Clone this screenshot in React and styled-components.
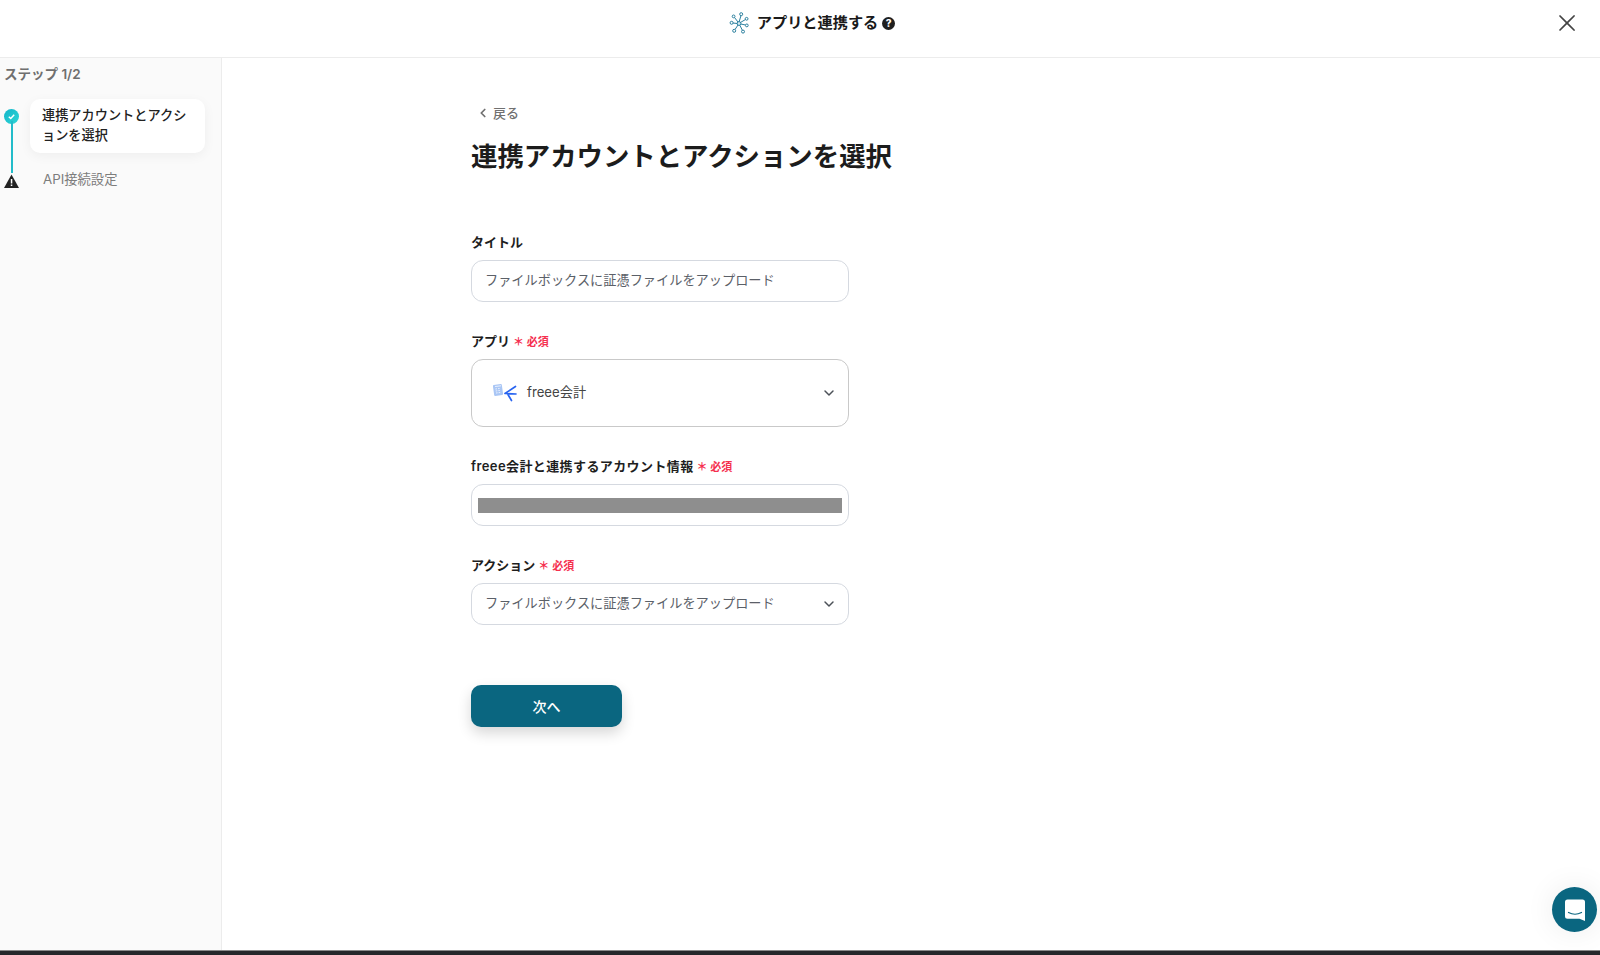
import React from "react";
import styled, { createGlobalStyle } from "styled-components";
import { HiXMark } from "react-icons/hi2";
import { FiChevronDown, FiChevronLeft } from "react-icons/fi";

const GlobalStyle = createGlobalStyle`
  html, body {
    margin: 0;
    padding: 0;
    background: #fff;
    font-family: Inter, "Noto Sans CJK JP", sans-serif;
    overflow: hidden;
  }
`;

const NetworkIcon = () => (
  <svg width="20" height="22" viewBox="0 0 20 22" fill="none" stroke="#2a7f9e" strokeWidth="1">
    <circle cx="10" cy="11.5" r="1.9" fill="#d6ecf3" />
    <path d="M10.2 9.6 L12 3.5 M11.6 10.4 L16.5 7.5 M11.8 12 L16.5 13 M10.8 13.2 L13.5 18.5 M9 13 L6 17.5 M8.2 11.5 L4 11 M9 10 L5.5 5.5" />
    <circle cx="12.2" cy="2.2" r="1.5" fill="#fff" />
    <circle cx="17.6" cy="6.8" r="1.4" fill="#fff" />
    <circle cx="17.8" cy="13.4" r="1.4" fill="#fff" />
    <circle cx="14" cy="19.6" r="1.5" fill="#fff" />
    <circle cx="5.2" cy="18.8" r="1.5" fill="#fff" />
    <circle cx="2.6" cy="10.8" r="1.5" fill="#fff" />
    <circle cx="4.6" cy="4.4" r="1.4" fill="#fff" />
  </svg>
);

const FreeeIcon = () => (
  <svg width="24" height="20" viewBox="0 0 24 20" fill="none">
    <rect x="0.5" y="1.5" width="9" height="11" rx="1" transform="rotate(-8 5 7)" fill="#a9c6f5" />
    <path d="M2 3.5 L8 2.8 M2.4 6 L4 5.8 M5 5.7 L6.6 5.5 M2.7 8 L4.3 7.8 M5.3 7.7 L6.9 7.5 M3 10 L4.6 9.8 M5.6 9.7 L7.2 9.5" stroke="#f2f6fe" strokeWidth="0.9" />
    <path d="M22.5 3.5 L12 10.5 L23 11 M14.5 10.8 L18.5 17.5" stroke="#2864f0" strokeWidth="1.7" strokeLinecap="round" strokeLinejoin="round" />
  </svg>
);

const ChatIcon = () => (
  <svg width="24" height="24" viewBox="0 0 24 24">
    <path d="M4.5 1.5 H19.5 A2.5 2.5 0 0 1 22 4 V23 L16.5 20.8 H4.5 A2.5 2.5 0 0 1 2 18.3 V4 A2.5 2.5 0 0 1 4.5 1.5 Z" fill="#fff" />
    <path d="M5.5 14.5 Q12 18 18.5 14.5" stroke="#0a6680" strokeWidth="1.2" fill="none" strokeLinecap="round" />
  </svg>
);

const Page = styled.div`
  display: flex;
  flex-direction: column;
  width: 1600px;
  height: 955px;
`;

const Header = styled.header`
  flex: 0 0 58px;
  box-sizing: border-box;
  display: flex;
  align-items: flex-start;
  justify-content: center;
  position: relative;
  border-bottom: 1px solid #ececec;
  padding-top: 12px;
  padding-left: 24px;
`;

const HeaderTitle = styled.h1`
  display: flex;
  align-items: center;
  margin: 0;
  font-size: 15.2px;
  line-height: 22px;
  font-weight: 600;
  color: #1a1a1a;
  svg {
    margin-right: 8px;
  }
`;

const HelpBadge = styled.span`
  width: 13px;
  height: 13px;
  margin-left: 4px;
  border-radius: 50%;
  background: #1f1f1f;
  color: #fff;
  font-size: 10px;
  line-height: 13px;
  font-weight: 800;
  text-align: center;
`;

const CloseButton = styled.button`
  position: absolute;
  top: 9px;
  right: 19px;
  padding: 0;
  display: flex;
  border: none;
  background: transparent;
  color: #444;
`;

const Body = styled.div`
  flex: 1;
  display: flex;
  min-height: 0;
`;

const Sidebar = styled.aside`
  flex: 0 0 222px;
  box-sizing: border-box;
  background: #fafafa;
  border-right: 1px solid #ececec;
  padding: 7px 16px 0 4px;
`;

const StepCount = styled.div`
  font-size: 13.5px;
  line-height: 18px;
  font-weight: 600;
  color: #6f6f6f;
  margin-bottom: 16px;
`;

const StepRow = styled.div`
  display: flex;
  align-items: flex-start;
  position: relative;
`;

const StepMarker = styled.div`
  flex: 0 0 26px;
  display: flex;
  padding-top: ${(p) => p.$top}px;
`;

const CheckDot = styled.span`
  width: 15px;
  height: 15px;
  border-radius: 50%;
  background: linear-gradient(135deg, #12b5c9, #2fd6d6);
  display: flex;
  align-items: center;
  justify-content: center;
`;

const StepLine = styled.span`
  position: absolute;
  left: 6.5px;
  top: 22px;
  width: 2px;
  height: 52px;
  background: #22bcca;
`;

const ActiveStep = styled.div`
  flex: 1;
  background: #fff;
  border-radius: 10px;
  box-shadow: 0 3px 12px rgba(0, 0, 0, 0.05);
  padding: 6px 12px 8px;
  font-size: 13.2px;
  line-height: 20px;
  font-weight: 500;
  color: #222;
`;

const IdleStep = styled.div`
  padding: 16px 0 0 13px;
  font-size: 13.3px;
  line-height: 20px;
  color: #7d7d7d;
`;

const Main = styled.main`
  flex: 1;
  padding: 0 0 0 249px;
`;

const BackLink = styled.a`
  display: flex;
  align-items: center;
  gap: 3px;
  margin: 46px 0 0 5px;
  font-size: 13px;
  line-height: 18px;
  font-weight: 500;
  color: #707070;
`;

const Heading = styled.h2`
  margin: 16px 0 0;
  font-size: 26.4px;
  line-height: 36px;
  font-weight: 600;
  color: #1c1c1c;
`;

const Form = styled.div`
  width: 378px;
  margin-top: 57px;
`;

const Field = styled.div`
  margin-bottom: ${(p) => p.$gap}px;
`;

const Label = styled.div`
  display: flex;
  align-items: center;
  height: 20px;
  margin-bottom: 9px;
  font-size: 13px;
  font-weight: 600;
  color: #1e1e1e;
  letter-spacing: ${(p) => (p.$wide ? "0.4px" : "0")};
`;

const Required = styled.span`
  margin: 2px 0 0 3px;
  font-size: 11px;
  font-weight: 600;
  letter-spacing: 0;
  color: #f5304f;
`;

const Input = styled.div`
  box-sizing: border-box;
  display: flex;
  align-items: center;
  justify-content: space-between;
  height: ${(p) => p.$height}px;
  padding: ${(p) => p.$padding};
  background: #fff;
  border: 1px solid ${(p) => (p.$strong ? "#c9c9c9" : "#d5d9e0")};
  border-radius: 12px;
  font-size: 13.2px;
  color: #5b6068;
  svg.chevron {
    color: #4c5158;
  }
`;

const InputText = styled.span`
  margin-bottom: 3px;
`;

const AppValue = styled.span`
  display: flex;
  align-items: center;
  gap: 10px;
  color: #444;
`;

const MaskBar = styled.div`
  width: 100%;
  height: 15px;
  background: #8e8e8e;
`;

const NextButton = styled.button`
  display: block;
  width: 151px;
  height: 42px;
  margin-top: 60px;
  border: none;
  border-radius: 10px;
  background: #0a6680;
  box-shadow: 0 6px 14px rgba(0, 0, 0, 0.16);
  color: #fff;
  font-family: inherit;
  font-size: 14px;
  font-weight: 500;
`;

const ChatButton = styled.div`
  position: absolute;
  left: 1552px;
  top: 887px;
  width: 45px;
  height: 45px;
  border-radius: 50%;
  background: #0a6680;
  display: flex;
  align-items: center;
  justify-content: center;
  box-shadow: 0 0 30px rgba(0, 0, 0, 0.08);
`;

const BottomStrip = styled.div`
  flex: 0 0 4px;
  background: #26282b;
  border-top: 1px solid #8a8a8a;
`;

export default function App() {
  return (
    <Page>
      <GlobalStyle />
      <Header>
        <HeaderTitle>
          <NetworkIcon />
          アプリと連携する
          <HelpBadge>?</HelpBadge>
        </HeaderTitle>
        <CloseButton>
          <HiXMark size={28} />
        </CloseButton>
      </Header>
      <Body>
        <Sidebar>
          <StepCount>ステップ 1/2</StepCount>
          <StepRow>
            <StepMarker $top={10}>
              <CheckDot>
                <svg width="9" height="9" viewBox="0 0 10 10" fill="none" stroke="#fff" strokeWidth="1.6">
                  <path d="M2 5.2 L4.2 7.2 L8 3" />
                </svg>
              </CheckDot>
            </StepMarker>
            <StepLine />
            <ActiveStep>連携アカウントとアクションを選択</ActiveStep>
          </StepRow>
          <StepRow>
            <StepMarker $top={21}>
              <svg width="15" height="14" viewBox="0 0 15 14">
                <path d="M7.5 0.5 L15 14 H0 Z" fill="#222" />
                <rect x="6.8" y="5" width="1.5" height="4.5" fill="#fff" />
                <rect x="6.8" y="10.5" width="1.5" height="1.5" fill="#fff" />
              </svg>
            </StepMarker>
            <IdleStep>API接続設定</IdleStep>
          </StepRow>
        </Sidebar>
        <Main>
          <BackLink>
            <FiChevronLeft size={14} strokeWidth={3} />
            戻る
          </BackLink>
          <Heading>連携アカウントとアクションを選択</Heading>
          <Form>
            <Field $gap={28}>
              <Label>タイトル</Label>
              <Input $height={42} $padding="0 13px">
                <InputText>ファイルボックスに証憑ファイルをアップロード</InputText>
              </Input>
            </Field>
            <Field $gap={28}>
              <Label>
                アプリ<Required>＊ 必須</Required>
              </Label>
              <Input $height={68} $padding="0 11px 0 21px" $strong>
                <AppValue>
                  <FreeeIcon />
                  <InputText>freee会計</InputText>
                </AppValue>
                <FiChevronDown className="chevron" size={16} strokeWidth={2.2} />
              </Input>
            </Field>
            <Field $gap={28}>
              <Label $wide>
                freee会計と連携するアカウント情報<Required>＊ 必須</Required>
              </Label>
              <Input $height={42} $padding="0 6px">
                <MaskBar />
              </Input>
            </Field>
            <Field $gap={0}>
              <Label>
                アクション<Required>＊ 必須</Required>
              </Label>
              <Input $height={42} $padding="0 11px 0 13px">
                <InputText>ファイルボックスに証憑ファイルをアップロード</InputText>
                <FiChevronDown className="chevron" size={16} strokeWidth={2.2} />
              </Input>
            </Field>
            <NextButton>次へ</NextButton>
          </Form>
        </Main>
      </Body>
      <BottomStrip />
      <ChatButton>
        <ChatIcon />
      </ChatButton>
    </Page>
  );
}
